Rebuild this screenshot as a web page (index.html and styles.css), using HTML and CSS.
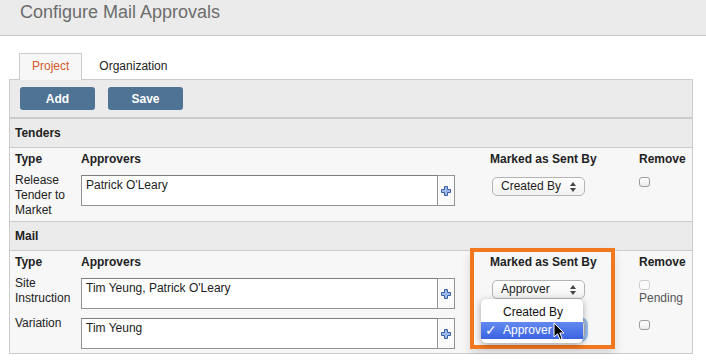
FILE: index.html
```html
<!DOCTYPE html>
<html lang="en">
<head>
    <meta charset="UTF-8">
    <title>Configure Mail Approvals</title>
    <link rel="stylesheet" href="styles.css">
</head>
<body>
    <div class="page-head">
        <h1>Configure Mail Approvals</h1>
    </div>

    <div class="content">
        <ul class="tabs">
            <li class="tab active">Project</li>
            <li class="tab">Organization</li>
        </ul>

        <div class="panel">
            <div class="toolbar">
                <button class="btn">Add</button>
                <button class="btn">Save</button>
            </div>

            <div class="section">
                <div class="section-title">Tenders</div>
                <div class="grid grid-head">
                    <div>Type</div>
                    <div>Approvers</div>
                    <div class="col-sent">Marked as Sent By</div>
                    <div>Remove</div>
                </div>
                <div class="grid grid-row tall">
                    <div class="type">Release Tender to Market</div>
                    <div class="approvers">
                        <div class="approvers-box">Patrick O'Leary</div>
                        <span class="add-cell"><svg width="10" height="10" viewBox="-0.5 -0.5 10 10"><polygon points="3,0 6,0 6,3 9,3 9,6 6,6 6,9 3,9 3,6 0,6 0,3 3,3" fill="#9db9ea" stroke="#3c5ca6" stroke-width="1"/></svg></span>
                    </div>
                    <div class="col-sent">
                        <div class="select">Created By<svg class="arrows" width="6" height="10" viewBox="0 0 6 10"><polygon points="3,0 6,4 0,4" fill="#444"/><polygon points="0,6 6,6 3,10" fill="#444"/></svg></div>
                    </div>
                    <div><span class="check"></span></div>
                </div>
            </div>

            <div class="section">
                <div class="section-title bordered">Mail</div>
                <div class="grid grid-head">
                    <div>Type</div>
                    <div>Approvers</div>
                    <div class="col-sent">Marked as Sent By</div>
                    <div>Remove</div>
                </div>
                <div class="grid grid-row">
                    <div class="type">Site Instruction</div>
                    <div class="approvers">
                        <div class="approvers-box">Tim Yeung, Patrick O'Leary</div>
                        <span class="add-cell"><svg width="10" height="10" viewBox="-0.5 -0.5 10 10"><polygon points="3,0 6,0 6,3 9,3 9,6 6,6 6,9 3,9 3,6 0,6 0,3 3,3" fill="#9db9ea" stroke="#3c5ca6" stroke-width="1"/></svg></span>
                    </div>
                    <div class="col-sent">
                        <div class="select">Approver<svg class="arrows" width="6" height="10" viewBox="0 0 6 10"><polygon points="3,0 6,4 0,4" fill="#444"/><polygon points="0,6 6,6 3,10" fill="#444"/></svg></div>
                    </div>
                    <div>
                        <span class="check disabled"></span>
                        <div class="pending">Pending</div>
                    </div>
                </div>
                <div class="grid grid-row">
                    <div class="type">Variation</div>
                    <div class="approvers">
                        <div class="approvers-box">Tim Yeung</div>
                        <span class="add-cell"><svg width="10" height="10" viewBox="-0.5 -0.5 10 10"><polygon points="3,0 6,0 6,3 9,3 9,6 6,6 6,9 3,9 3,6 0,6 0,3 3,3" fill="#9db9ea" stroke="#3c5ca6" stroke-width="1"/></svg></span>
                    </div>
                    <div class="col-sent">
                        <!-- this one is open: its popup covers it -->
                        <div class="select focused"><svg class="arrows" width="6" height="10" viewBox="0 0 6 10"><polygon points="3,0 6,4 0,4" fill="#444"/><polygon points="0,6 6,6 3,10" fill="#444"/></svg></div>
                    </div>
                    <div><span class="check"></span></div>
                </div>
            </div>

            <!-- highlight frame and open popup drawn over the grid -->
            <div class="callout"></div>
            <ul class="popup-menu">
                <li>Created By</li>
                <li class="picked"><span class="tick">&#10003;</span>Approver</li>
            </ul>
            <svg class="cursor" width="12" height="19" viewBox="0 0 12 19"><path d="M1 1 L1 15 L4.5 11.8 L7 17.5 L9.2 16.5 L6.8 11 L11 11 Z" fill="#000" stroke="#fff" stroke-width="1" stroke-linejoin="round"/></svg>
        </div>
    </div>
</body>
</html>
```

FILE: styles.css
```css
html, body {
    margin: 0;
    padding: 0;
    background: #fff;
    font-family: 'Liberation Sans', Arial, Helvetica, sans-serif;
    font-size: 12px;
    color: #222;
}
.page-head {
    background: #ebebeb;
    border-bottom: 1px solid #c9c9c9;
    height: 35px;
}
.page-head h1 {
    margin: 0;
    padding: 0 20px;
    font-size: 18px;
    font-weight: normal;
    line-height: 24px;
    color: #6c6c6c;
}
.content {
    padding: 17px 13px 0 9px;
}
.tabs {
    list-style: none;
    margin: 0;
    padding: 0 0 0 10px;
    display: flex;
    gap: 4px;
    position: relative;
    z-index: 1;
}
.tab {
    height: 26px;
    line-height: 25px;
    padding: 0 12px;
    border: 1px solid transparent;
    border-bottom: none;
    box-sizing: border-box;
}
.tab.active {
    background: #f7f7f7;
    border-color: #ccc;
    color: #d2592a;
    height: 27px;
    margin-bottom: -1px;
}
.panel {
    position: relative;
    border: 1px solid #ccc;
    background: #f7f7f7;
}
.toolbar {
    background: #ebebeb;
    padding: 7px 10px;
    border-bottom: 2px solid #cbcbcb;
    display: flex;
    gap: 13px;
}
.btn {
    width: 75px;
    height: 23px;
    border: none;
    border-radius: 3px;
    background: #4f7394;
    color: #fff;
    font-family: inherit;
    font-size: 12px;
    font-weight: bold;
    padding: 0;
}
.section-title {
    background: #ebebeb;
    height: 28px;
    line-height: 28px;
    padding-left: 5px;
    font-weight: bold;
    border-bottom: 1px solid #ccc;
}
.section-title.bordered {
    border-top: 1px solid #ccc;
}
.grid {
    display: grid;
    grid-template-columns: 66px 374px 184px 1fr;
    padding-left: 5px;
}
.grid-head {
    height: 22px;
    line-height: 22px;
    font-weight: bold;
}
.col-sent {
    padding-left: 35px;
}
.grid-row {
    align-items: start;
}
.type {
    padding: 3px 6px 3px 0;
    line-height: 15px;
}
.approvers {
    display: flex;
    margin: 5px 0 4px;
    height: 31px;
}
.approvers-box {
    width: 357px;
    box-sizing: border-box;
    border: 1px solid #939393;
    border-top-color: #7e7e7e;
    background: #fff;
    padding: 2px 4px;
    line-height: 15px;
}
.add-cell {
    width: 17px;
    box-sizing: border-box;
    border: 1px solid #939393;
    border-left: none;
    background: #fafafa;
    display: flex;
    align-items: center;
    justify-content: center;
    padding-top: 1px;
}
.select {
    position: relative;
    margin: 7px 0 0 2px;
    width: 93px;
    height: 19px;
    box-sizing: border-box;
    border: 1px solid #b4b4b4;
    border-radius: 5px;
    background: linear-gradient(#ffffff, #f1f1f1);
    padding-left: 8px;
    line-height: 17px;
}
.select.focused {
    box-shadow: 0 0 0 3px rgba(110, 160, 230, 0.7);
}
.arrows {
    position: absolute;
    right: 8px;
    top: 4px;
}
.check {
    display: block;
    margin-top: 7px;
    width: 11px;
    height: 10px;
    box-sizing: border-box;
    border: 1px solid #9c9c9c;
    border-radius: 3px;
    background: linear-gradient(#ffffff, #ececec);
}
.check.disabled {
    border-color: #cdcdcd;
    background: #fbfbfb;
}
.pending {
    color: #555;
    line-height: 15px;
    margin-top: 1px;
}
.callout {
    position: absolute;
    left: 460px;
    top: 168px;
    width: 145px;
    height: 101px;
    box-sizing: border-box;
    border: 4px solid #f2781f;
    box-shadow: 0 6px 10px rgba(0, 0, 0, 0.12);
    pointer-events: none;
}
.popup-menu {
    position: absolute;
    left: 471px;
    top: 219px;
    width: 102px;
    margin: 0;
    padding: 5px 0 4px;
    list-style: none;
    background: #fff;
    border-radius: 5px;
    box-shadow: 0 2px 7px rgba(0, 0, 0, 0.35);
    box-sizing: border-box;
}
.popup-menu li {
    height: 16px;
    line-height: 16px;
    padding-left: 22px;
    color: #111;
    position: relative;
}
.popup-menu li.picked {
    margin-top: 2px;
    height: 17px;
    background: linear-gradient(#6389f0, #3b63e2);
    color: #fff;
}
.tick {
    position: absolute;
    left: 4px;
    top: 0;
    font-size: 14px;
    font-weight: bold;
    font-family: 'DejaVu Sans', sans-serif;
}
.cursor {
    position: absolute;
    left: 543px;
    top: 242px;
}
```
